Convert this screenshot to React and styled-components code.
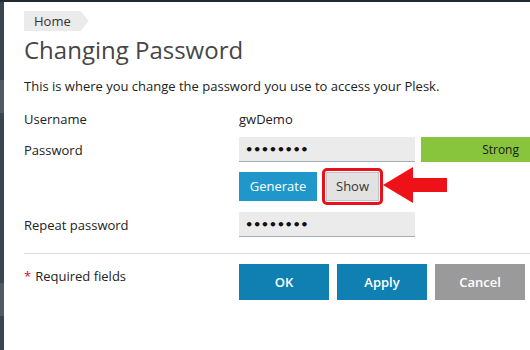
import React from 'react';
import styled, { createGlobalStyle } from 'styled-components';

const GlobalStyle = createGlobalStyle`
  html, body {
    margin: 0;
    padding: 0;
    background: #fff;
    overflow: hidden;
  }
  body {
    font-family: 'Open Sans', 'DejaVu Sans', sans-serif;
    color: #222;
  }
`;

const Frame = styled.div`
  width: 530px;
  height: 350px;
  display: flex;
  flex-direction: column;
  overflow: hidden;
`;
const TopBar = styled.div`
  height: 2px;
  background: #222a31;
  flex-shrink: 0;
`;
const Body = styled.div`
  flex: 1;
  display: flex;
  min-height: 0;
`;
const Sidebar = styled.div`
  width: 4px;
  flex-shrink: 0;
  display: flex;
  flex-direction: column;
  background: #3a4550;
`;
const SideItem = styled.div`
  height: ${(p) => p.h}px;
  background: ${(p) => (p.active ? '#525a61' : 'transparent')};
`;
const Main = styled.main`
  flex: 1;
  padding: 9px 0 0 20px;
  min-width: 0;
`;
const Crumb = styled.div`
  width: fit-content;
  height: 20px;
  line-height: 20px;
  padding: 0 18px 0 10px;
  font-size: 13px;
  color: #333;
  background: #ebebeb;
  clip-path: polygon(0 0, calc(100% - 8px) 0, 100% 50%, calc(100% - 8px) 100%, 0 100%);
`;
const Title = styled.h1`
  margin: 4px 0 0;
  font-size: 24px;
  line-height: 30px;
  font-weight: 400;
  color: #464646;
`;
const Intro = styled.p`
  margin: 12px 0 0;
  font-size: 13px;
  line-height: 18px;
  color: #222;
`;
const Form = styled.div`
  margin-top: 15px;
  display: flex;
  flex-direction: column;
`;
const Row = styled.div`
  display: flex;
  align-items: ${(p) => (p.top ? 'flex-start' : 'center')};
  margin-top: ${(p) => p.gap || 0}px;
`;
const Label = styled.div`
  width: 215px;
  flex-shrink: 0;
  font-size: 13px;
  line-height: 18px;
  padding-top: ${(p) => p.pad || 0}px;
`;
const Value = styled.div`
  font-size: 13px;
  line-height: 18px;
`;
const Field = styled.input`
  box-sizing: border-box;
  width: 176px;
  height: 25px;
  border: none;
  border-bottom: 1px solid #a3adb5;
  background: #ebebeb;
  padding: 0 6px;
  font-family: 'DejaVu Sans', sans-serif;
  font-size: 13px;
  font-weight: 700;
  letter-spacing: -0.4px;
  color: #111;
  outline: none;
`;
const Meter = styled.div`
  margin-left: 6px;
  width: 110px;
  height: 25px;
  box-sizing: border-box;
  padding-right: 11px;
  background: #88c43c;
  font-size: 12px;
  line-height: 25px;
  text-align: right;
  color: #1a1a1a;
`;
const Button = styled.button`
  box-sizing: border-box;
  height: ${(p) => p.h || 29}px;
  width: ${(p) => p.w}px;
  padding: 0;
  border: ${(p) => (p.kind === 'light' ? '1px solid #c4c4c4' : 'none')};
  background: ${(p) =>
    ({ generate: '#1f97cb', primary: '#0f80b1', cancel: '#9a9a9a', light: '#e2e2e2' })[p.kind]};
  color: ${(p) => (p.kind === 'light' ? '#333' : '#fff')};
  font-family: 'Open Sans', sans-serif;
  font-size: 13px;
  font-weight: ${(p) => (p.bold ? 600 : 400)};
  cursor: pointer;
`;
const Highlight = styled.div`
  margin-left: 5px;
  padding: 1px;
  border: 3px solid #e8101a;
  border-radius: 5px;
  display: flex;
`;
const Arrow = styled.svg`
  display: block;
`;
const Divider = styled.hr`
  margin: 16px 0 0;
  border: none;
  border-top: 1px solid #dcdcdc;
  height: 0;
`;
const Actions = styled.div`
  display: flex;
  gap: 8px;
`;
const Star = styled.span`
  color: #c8102e;
  margin-right: 4px;
`;

export default function App() {
  return (
    <>
      <GlobalStyle />
      <Frame>
        <TopBar />
        <Body>
          <Sidebar>
            <SideItem h={78} />
            <SideItem h={33} active />
            <SideItem h={170} />
            <SideItem h={33} active />
          </Sidebar>
          <Main>
            <Crumb>Home</Crumb>
            <Title>Changing Password</Title>
            <Intro>This is where you change the password you use to access your Plesk.</Intro>
            <Form>
              <Row>
                <Label>Username</Label>
                <Value>gwDemo</Value>
              </Row>
              <Row gap={9}>
                <Label>Password</Label>
                <Field type="password" readOnly value="gwDemo12" />
                <Meter>Strong</Meter>
              </Row>
              <Row gap={4}>
                <Label />
                <Button kind="generate" w={78}>Generate</Button>
                <Highlight>
                  <Button kind="light" w={53}>Show</Button>
                </Highlight>
                <Arrow width="64" height="40" viewBox="0 0 64 40">
                  <polygon points="0,19 30,1 30,12 64,12 64,26 30,26 30,37" fill="#ee1118" />
                </Arrow>
              </Row>
              <Row gap={6}>
                <Label>Repeat password</Label>
                <Field type="password" readOnly value="gwDemo12" />
              </Row>
            </Form>
            <Divider />
            <Row top gap={10}>
              <Label pad={3}>
                <Star>*</Star>Required fields
              </Label>
              <Actions>
                <Button kind="primary" bold w={90} h={36}>OK</Button>
                <Button kind="primary" bold w={90} h={36}>Apply</Button>
                <Button kind="cancel" bold w={90} h={36}>Cancel</Button>
              </Actions>
            </Row>
          </Main>
        </Body>
      </Frame>
    </>
  );
}
